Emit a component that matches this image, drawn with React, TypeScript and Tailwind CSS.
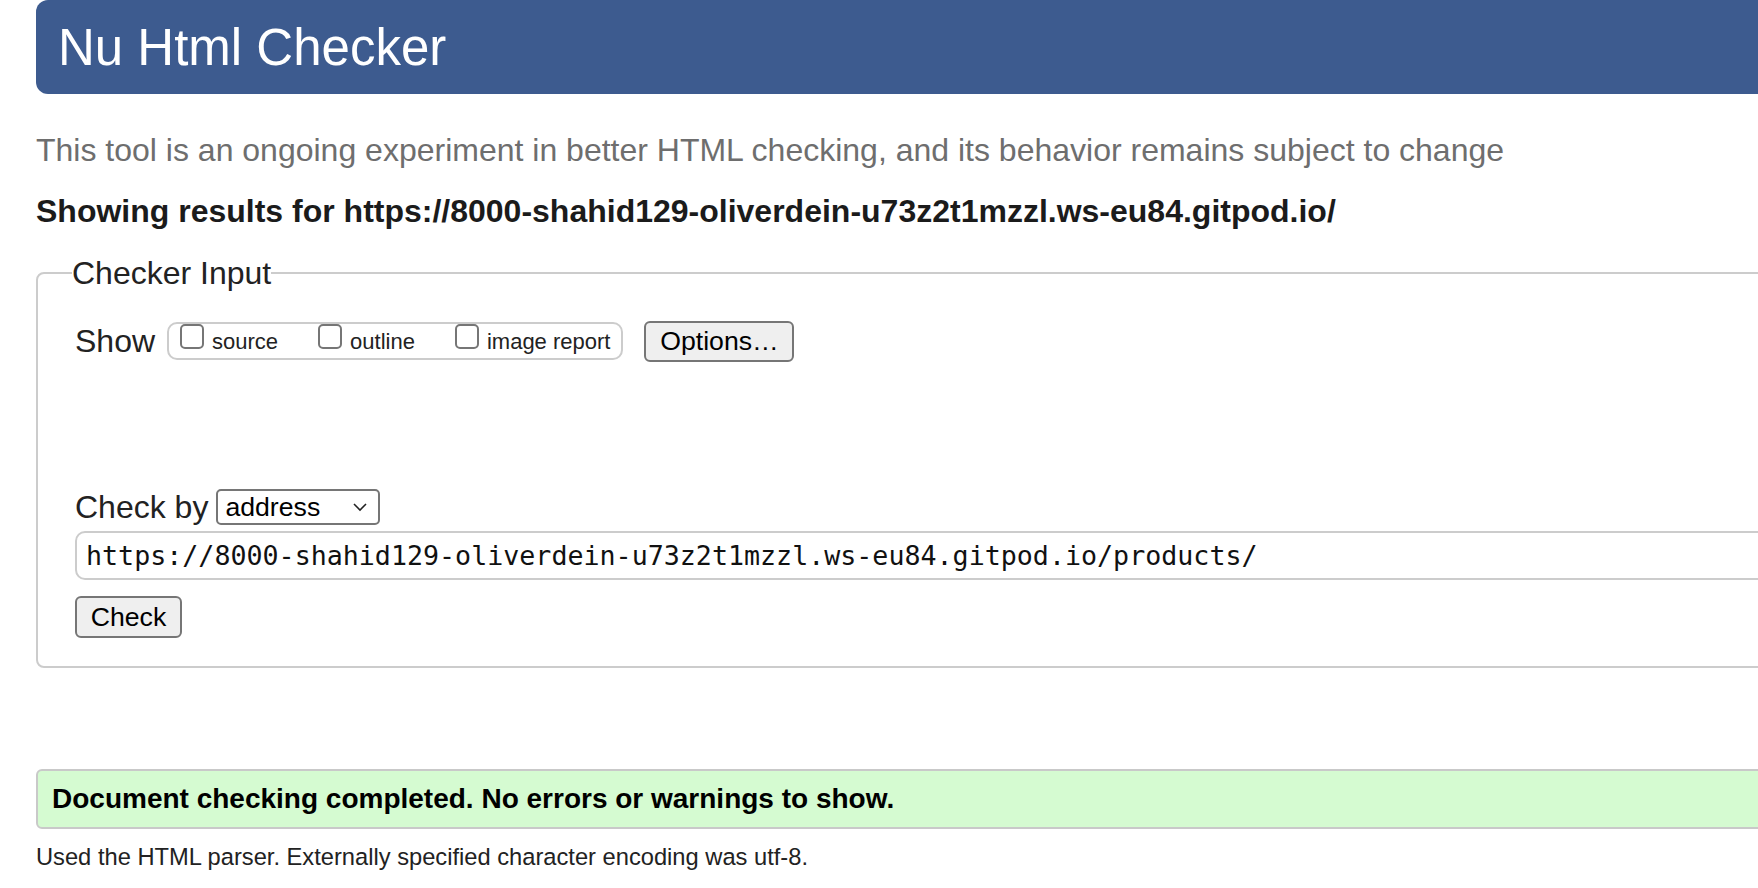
const url =
  "https://8000-shahid129-oliverdein-u73z2t1mzzl.ws-eu84.gitpod.io/products/";

function Box({ label }: { label: string }) {
  return (
    <label className="flex items-baseline gap-[8px]">
      <input
        type="checkbox"
        className="appearance-none m-0 w-[24px] h-[25px] border-2 border-[#767676] rounded-[5px] bg-white"
      />
      <span className="text-[22px] leading-none text-[#222]">{label}</span>
    </label>
  );
}

export default function App() {
  return (
    <div className="w-full h-[888px] overflow-hidden bg-white font-['Liberation_Sans',Arial,sans-serif]">
      <div className="w-[1800px] ml-[36px]">
        <header className="h-[94px] flex items-center px-[22px] rounded-[12px] bg-[#3d5b8f]">
          <h1 className="text-[51px] leading-none text-white">Nu Html Checker</h1>
        </header>

        <p className="mt-[40px] text-[32px] leading-8 text-[#6e6e6e]">
          This tool is an ongoing experiment in better HTML checking, and its behavior remains subject to change
        </p>
        <p className="mt-[29px] text-[32px] leading-8 font-bold text-[#1b1b1b]">
          Showing results for https://8000-shahid129-oliverdein-u73z2t1mzzl.ws-eu84.gitpod.io/
        </p>

        <fieldset className="mt-[30px] min-w-0 border-2 border-[#cccccc] rounded-[8px] pl-[37px] pt-[31px] pb-[28px]">
          <legend className="ml-[-3px] text-[32px] leading-8 text-[#222]">Checker Input</legend>

          <div className="flex items-center h-[42px]">
            <span className="text-[32px] leading-none text-[#222]">Show</span>
            <div className="ml-[12px] h-[38px] flex items-start gap-[40px] px-[11px] border-2 border-[#cccccc] rounded-[10px]">
              <Box label="source" />
              <Box label="outline" />
              <Box label="image report" />
            </div>
            <button className="ml-[21px] w-[150px] h-[41px] border-2 border-[#767676] rounded-[6px] bg-[#efefef] text-[26.67px] leading-none text-black">
              Options…
            </button>
          </div>

          <div className="mt-[127px] flex items-center h-[36px]">
            <span className="text-[32px] leading-none text-[#222]">Check by</span>
            <div className="ml-[8px] w-[164px] h-[36px] flex items-center justify-between pl-[7px] pr-[10px] border-2 border-[#767676] rounded-[5px] bg-white">
              <span className="text-[26.67px] leading-none text-black">address</span>
              <svg width="16" height="10" viewBox="0 0 16 10" fill="none">
                <path d="M2 2 L8 8 L14 2" stroke="#222" strokeWidth="1.6" />
              </svg>
            </div>
          </div>

          <input
            readOnly
            value={url}
            className="mt-[6px] block w-full h-[49px] pl-[9px] border-2 border-[#cccccc] rounded-[10px] bg-white text-[26.67px] text-[#111] font-['DejaVu_Sans_Mono',monospace] outline-none"
          />

          <button className="mt-[16px] block w-[107px] h-[42px] border-2 border-[#767676] rounded-[6px] bg-[#efefef] text-[26.67px] leading-none text-black">
            Check
          </button>
        </fieldset>

        <div className="mt-[101px] h-[60px] flex items-center pl-[14px] border-2 border-[#c9c9c9] rounded-[6px] bg-[#d5fbd1]">
          <span className="text-[28px] leading-none font-bold text-black">
            Document checking completed. No errors or warnings to show.
          </span>
        </div>

        <p className="mt-[16px] text-[23.7px] leading-6 text-[#222]">
          Used the HTML parser. Externally specified character encoding was utf-8.
        </p>
      </div>
    </div>
  );
}
